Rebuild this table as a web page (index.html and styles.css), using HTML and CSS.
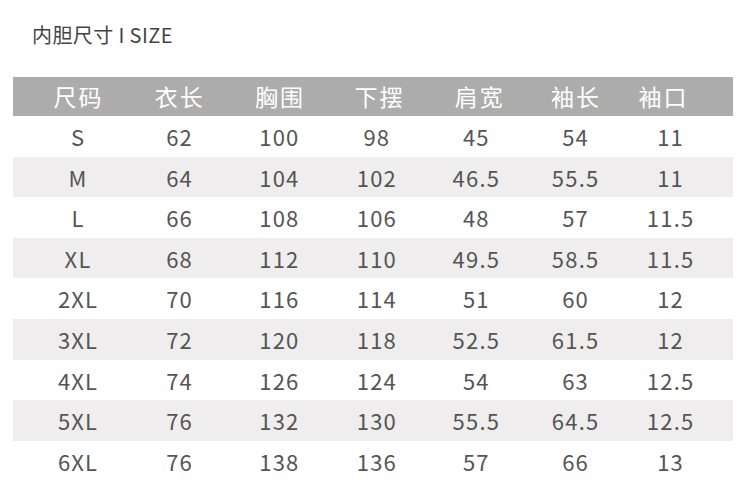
FILE: index.html
```html
<!DOCTYPE html>
<html lang="zh">
<head>
<meta charset="utf-8">
<link rel="stylesheet" href="styles.css">
</head>
<body>
<div class="page">
  <h1 class="title">内胆尺寸 I SIZE</h1>
  <div class="table">
    <div class="row head">
      <div>尺码</div><div>衣长</div><div>胸围</div><div>下摆</div><div>肩宽</div><div>袖长</div><div>袖口</div>
    </div>
    <div class="row body"><div>S</div><div>62</div><div>100</div><div>98</div><div>45</div><div>54</div><div>11</div></div>
    <div class="row body alt"><div>M</div><div>64</div><div>104</div><div>102</div><div>46.5</div><div>55.5</div><div>11</div></div>
    <div class="row body"><div>L</div><div>66</div><div>108</div><div>106</div><div>48</div><div>57</div><div>11.5</div></div>
    <div class="row body alt"><div>XL</div><div>68</div><div>112</div><div>110</div><div>49.5</div><div>58.5</div><div>11.5</div></div>
    <div class="row body"><div>2XL</div><div>70</div><div>116</div><div>114</div><div>51</div><div>60</div><div>12</div></div>
    <div class="row body alt"><div>3XL</div><div>72</div><div>120</div><div>118</div><div>52.5</div><div>61.5</div><div>12</div></div>
    <div class="row body"><div>4XL</div><div>74</div><div>126</div><div>124</div><div>54</div><div>63</div><div>12.5</div></div>
    <div class="row body alt"><div>5XL</div><div>76</div><div>132</div><div>130</div><div>55.5</div><div>64.5</div><div>12.5</div></div>
    <div class="row body"><div>6XL</div><div>76</div><div>138</div><div>136</div><div>57</div><div>66</div><div>13</div></div>
  </div>
</div>
</body>
</html>
```

FILE: styles.css
```css
html, body {
  margin: 0;
  padding: 0;
  background: #ffffff;
}
body {
  font-family: "Noto Sans CJK SC", "Noto Sans", sans-serif;
  color: #555555;
}
.page {
  width: 750px;
  height: 500px;
  padding: 0 17px 0 13px;
  box-sizing: border-box;
}
.title {
  margin: 0;
  padding: 22px 0 0 19px;
  height: 77px;
  box-sizing: border-box;
  font-size: 20px;
  font-weight: 400;
  line-height: 26px;
  letter-spacing: 0.4px;
  color: #444444;
}
.table {
  width: 720px;
}
.row {
  display: grid;
  align-items: center;
  text-align: center;
}
.head {
  height: 39px;
  background: #acacac;
  color: #ffffff;
  font-size: 23px;
  letter-spacing: 2px;
  text-indent: 2px;
  grid-template-columns: 101px 101.25px 99.5px 99.5px 100.75px 91.75px 83.5px;
  padding-left: 14px;
  line-height: 39px;
}
.body {
  height: 40.6px;
  font-size: 22px;
  letter-spacing: 1.2px;
  text-indent: 1.2px;
  line-height: 40.6px;
  grid-template-columns: 101px 102px 97.5px 97.5px 101.5px 97px 93px;
  padding-left: 14px;
}
.alt {
  background: #efeded;
}
```
